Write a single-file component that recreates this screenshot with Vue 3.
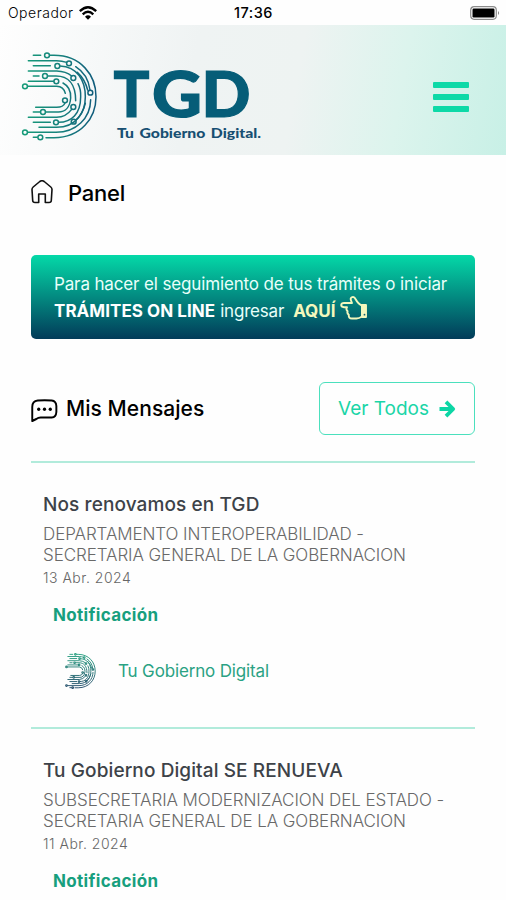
<script setup>
const circles = [
  [111, 46], [177, 70], [142, 78], [105, 108], [190, 114], [139, 124], [45, 139],
  [241, 158], [165, 181], [190, 201], [99, 216], [138, 247], [191, 245], [45, 277], [91, 292],
]
const tracks = [
  'M70 46H92', 'M119 46H132C212 46 258 105 258 170S212 293 132 293H108',
  'M55 62H140Q156 62 170 67', 'M197 80Q234 103 240 150',
  'M70 77H121', 'M150 78C202 80 226 122 226 170S198 262 140 262H87',
  'M55 93H140Q168 94 185 108', 'M202 97Q225 118 233 150',
  'M70 108H87', 'M113 108H138C174 108 197 132 197 182',
  'M204 131Q213 148 212 170C212 222 184 247 146 247',
  'M55 124H131', 'M159 129C178 139 183 157 182 174C180 202 165 216 145 216H107',
  'M53 139H140Q161 140 166 160',
  'M165 189Q160 202 140 202H77', 'M70 216H91',
  'M55 232H140Q168 231 185 208', 'M70 247H121',
  'M53 277H138C198 277 241 235 242 179', 'M198 240Q219 220 226 190', 'M70 292H82',
]
const messages = [
  {
    title: 'Nos renovamos en TGD',
    office: ['DEPARTAMENTO INTEROPERABILIDAD -', 'SECRETARIA GENERAL DE LA GOBERNACION'],
    date: '13 Abr. 2024',
    sender: 'Tu Gobierno Digital',
  },
  {
    title: 'Tu Gobierno Digital SE RENUEVA',
    office: ['SUBSECRETARIA MODERNIZACION DEL ESTADO -', 'SECRETARIA GENERAL DE LA GOBERNACION'],
    date: '11 Abr. 2024',
  },
]
</script>

<template>
  <div class="screen">
    <div class="status">
      <div class="carrier">
        <span>Operador</span>
        <svg width="18" height="14" viewBox="0 0 18 14" fill="none" stroke="#000" stroke-width="2.3">
          <path d="M.8 5.2Q9-2.6 17.200 5.200M3.700 8.300Q9 3.300 14.300 8.300" />
          <path d="M6 10.700Q9 8 12 10.700L9 13.700Z" fill="#000" stroke="none" />
        </svg>
      </div>
      <span class="clock">17:36</span>
      <svg class="battery" width="30" height="14" viewBox="0 0 30 14">
        <rect x=".7" y=".7" width="25.600" height="12.600" rx="3.500" fill="#fff" stroke="#8b8b8b" stroke-width="1.200" />
        <rect x="2.500" y="2.500" width="22" height="9" rx="1.200" />
        <path d="M28 5q2.200 2 0 4z" fill="#888" />
      </svg>
    </div>

    <header class="header">
      <svg class="brand" width="250" height="100" viewBox="0 0 250 100">
        <defs>
          <linearGradient id="mark" gradientUnits="userSpaceOnUse" x1="40" y1="0" x2="258" y2="0">
            <stop offset="0" stop-color="#169c79" />
            <stop offset=".5" stop-color="#16817c" />
            <stop offset="1" stop-color="#105b7c" />
          </linearGradient>
        </defs>
        <g transform="translate(-10 0) scale(.33333)" fill="none" stroke="url(#mark)" stroke-linecap="round">
          <path v-for="d in tracks" :key="d" :d="d" stroke-width="4.500" />
          <circle v-for="c in circles" :key="c.join()" :cx="c[0]" :cy="c[1]" r="7.300" stroke-width="4.500" />
        </g>
        <text class="tgd" y="76.500">
          <tspan x="93.500" textLength="36" lengthAdjust="spacingAndGlyphs">T</tspan>
          <tspan x="132" textLength="50" lengthAdjust="spacingAndGlyphs">G</tspan>
          <tspan x="181.500" textLength="49" lengthAdjust="spacingAndGlyphs">D</tspan>
        </text>
        <text class="slogan" x="97" y="98" textLength="144" lengthAdjust="spacingAndGlyphs">Tu Gobierno Digital.</text>
      </svg>
      <div class="burger"><i></i><i></i><i></i></div>
    </header>

    <main>
      <h1 class="panel">
        <svg width="22" height="24" viewBox="0 0 22 24" fill="none" stroke="#111" stroke-width="1.600" stroke-linejoin="round">
          <path d="M1 9.500Q1 8 2.200 7L8.800 1.500Q11 0 13.200 1.500L19.800 7Q21 8 21 9.500L20.300 20.500Q20.200 22.500 18 22.500H14.300V14H7.700V22.500H4Q1.800 22.500 1.700 20.500Z" />
        </svg>
        <span>Panel</span>
      </h1>

      <section class="banner">
        <div class="banner-one">Para hacer el seguimiento de tus trámites o iniciar</div>
        <div class="banner-two">
          <b class="tramites">TRÁMITES ON LINE</b>
          <span class="ingresar">ingresar</span>
          <b class="aqui">AQUÍ</b>
          <svg width="28" height="24" viewBox="0 0 28 24" fill="none" stroke="#f3f8bd" stroke-width="1.900" stroke-linejoin="round" stroke-linecap="round">
            <path d="M12 7H4Q1.200 7 1.200 9T4 11.200H7Q5.600 13.400 7.600 15.200Q6.800 17.500 8.800 18.700Q8.300 22.500 12 22.500H16.500Q19 22.500 22 20.500V9.500Q18.500 8.500 15.500 3Q14.300 .5 12.200 1.200Q10 2 11 4.500L12 7" />
            <path d="M22 9H26V21H22Z" fill="#f3f8bd" />
            <circle cx="24.500" cy="18.700" r=".9" fill="#126070" stroke="none" />
          </svg>
        </div>
      </section>

      <div class="inbox-head">
        <h2>
          <svg width="27" height="24" viewBox="0 0 28 24" preserveAspectRatio="none" fill="none" stroke="#000" stroke-width="2" stroke-linejoin="round">
            <path d="M1.300 22V8Q1.300 2.200 7 1.600Q14 .8 21.500 1.600Q26 2.100 26.300 7V13Q26 18.200 21.500 18.500H10Q7.500 18.500 5.500 20Z" />
            <g fill="#000" stroke="none">
              <circle cx="8" cy="10.300" r="1.700" /><circle cx="14" cy="10.300" r="1.700" /><circle cx="20" cy="10.300" r="1.700" />
            </g>
          </svg>
          <span>Mis Mensajes</span>
        </h2>
        <button>
          <span>Ver Todos</span>
          <svg width="17" height="18" viewBox="0 0 17 18" fill="none" stroke="#0dd6a5" stroke-width="3.800">
            <path d="M.5 9H14M7 1.800L14.200 9L7 16.200" stroke-linejoin="round" />
          </svg>
        </button>
      </div>

      <article v-for="m in messages" :key="m.title">
        <h3>{{ m.title }}</h3>
        <p v-for="line in m.office" :key="line" class="office">{{ line }}</p>
        <p class="date">{{ m.date }}</p>
        <p class="kind">Notificación</p>
        <div v-if="m.sender" class="sender">
          <svg width="31" height="36" viewBox="34 36 230 266" preserveAspectRatio="none" fill="none" stroke-linecap="round">
            <defs>
              <linearGradient id="tiny" gradientUnits="userSpaceOnUse" x1="0" y1="40" x2="0" y2="300">
                <stop offset="0" stop-color="#2ba383" />
                <stop offset="1" stop-color="#264b6b" />
              </linearGradient>
            </defs>
            <g stroke="url(#tiny)">
              <path v-for="d in tracks" :key="d" :d="d" stroke-width="7" />
              <circle v-for="c in circles" :key="c.join()" :cx="c[0]" :cy="c[1]" r="6" stroke-width="8" />
            </g>
          </svg>
          <span>{{ m.sender }}</span>
        </div>
      </article>
    </main>
  </div>
</template>

<style>
body { background: #fff; overflow: hidden; }
</style>

<style scoped>
.screen { width: 506px; height: 900px; overflow: hidden; background: #fefefe; font-family: Inter, "Liberation Sans", sans-serif; color: #000; }
.screen svg { display: block; flex: none; }
h1, h2, h3, p { margin: 0; font-weight: 500; }
span, b, h3, p, .banner-one { white-space: nowrap; }
.status { height: 25px; box-sizing: border-box; padding: 0 6px 0 8px; display: grid; grid-template-columns: 1fr auto 1fr; align-items: center; font-size: 14px; line-height: 25px; }
.carrier { display: flex; align-items: center; gap: 5px; font-weight: 300; letter-spacing: .5px; }
.clock { font-weight: 500; font-size: 14.5px; letter-spacing: .5px; margin-right: 1px; }
.battery { justify-self: end; }
.header { height: 130px; display: flex; justify-content: space-between; align-items: center; padding: 0 37px 0 20px; background: linear-gradient(100deg, #fefefe 0%, #eff3f3 38%, #eef3f2 58%, #dcf4ed 78%, #c8f0e6 100%); }
.brand { overflow: visible; }
.tgd { font: 900 62px Lato, sans-serif; fill: #065d78; stroke: #065d78; stroke-width: 1.2px; }
.slogan { font: 900 14px Lato, sans-serif; fill: #174f72; word-spacing: 1.5px; }
.burger { width: 36px; display: grid; gap: 6px; padding-top: 14px; }
.burger i { height: 6px; border-radius: 1px; background: #0dd9a7; }
main { padding: 24px 31px 0 31px; }
.panel { height: 28px; display: flex; align-items: center; gap: 15px; font-size: 22px; line-height: 28px; letter-spacing: -.25px; }
.panel svg { margin-top: -2px; }
.banner { height: 84px; box-sizing: border-box; margin-top: 48px; padding: 16px 23px; border-radius: 5px; background: linear-gradient(#04d9a8, #023b59); color: #e9fffa; font-size: 17px; line-height: 27px; }
.banner-one { letter-spacing: -.14px; }
.banner-two { display: flex; }
.tramites { color: #fff; margin-right: 5px; letter-spacing: .05px; }
.ingresar { margin-right: 9px; letter-spacing: -.2px; }
.aqui { color: #f3f8bd; margin-right: 4px; }
.banner-two svg { margin-top: -2px; }
.inbox-head { height: 124px; box-sizing: border-box; padding-top: 43px; display: flex; justify-content: space-between; align-items: flex-start; border-bottom: 2px solid #b1ebdb; }
h2 { height: 53px; display: flex; align-items: center; gap: 8px; font-size: 21px; letter-spacing: .06px; }
h2 svg { margin-top: 4px; }
button { width: 156px; height: 53px; padding: 0; display: flex; align-items: center; justify-content: center; gap: 10px; border: 1px solid #4be0bd; border-radius: 6px; background: #fefefe; color: #1ad5a7; font: 400 19px Inter, sans-serif; }
article { height: 266px; box-sizing: border-box; padding: 26px 12px 0; border-bottom: 2px solid #b1ebdb; }
h3 { height: 35px; line-height: 31px; font-size: 19px; color: #3d4248; letter-spacing: .1px; }
.office { font-size: 17px; line-height: 21px; font-weight: 300; color: #696969; letter-spacing: -.08px; }
.date { line-height: 23px; font-size: 14px; font-weight: 300; color: #666; letter-spacing: .5px; }
.kind { margin: 14px 0 0 10px; line-height: 24px; font-size: 17px; font-weight: 700; color: #179f7e; letter-spacing: .33px; }
.sender { display: flex; align-items: center; gap: 22px; margin: 25px 0 0 22px; height: 38px; font-size: 17px; letter-spacing: -.15px; color: #2aa283; }
</style>
